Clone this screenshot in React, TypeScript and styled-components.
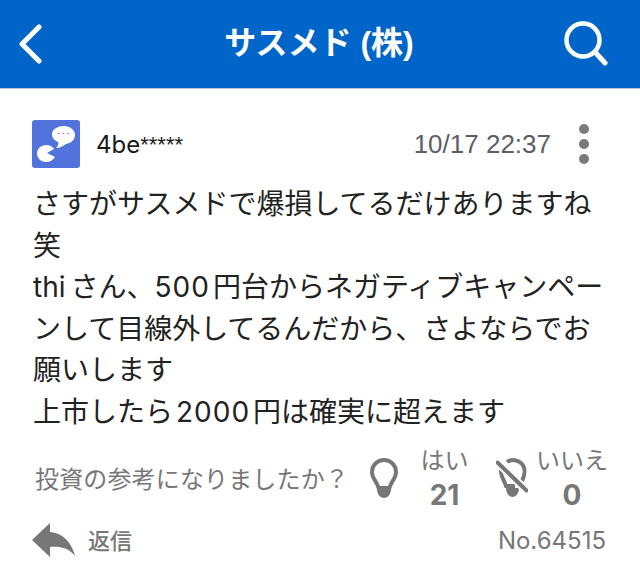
import styled, { createGlobalStyle } from "styled-components";

const GlobalStyle = createGlobalStyle`
	html, body {
		margin: 0;
		padding: 0;
		background: #fff;
	}
	body {
		font-family: Inter, "Noto Sans CJK JP", sans-serif;
	}
`;

const Page = styled.div`
	width: 640px;
	height: 576px;
	overflow: hidden;
	background: #fff;
`;

const Header = styled.header`
	height: 89px;
	box-sizing: border-box;
	padding: 0 18px;
	background: #0065c8;
	display: grid;
	grid-template-columns: 1fr auto 1fr;
	align-items: center;
	border-bottom: 1px solid #b9c6d6;
`;

const HeaderButton = styled.div<{ $end?: boolean }>`
	display: flex;
	justify-content: ${(p) => (p.$end ? "flex-end" : "flex-start")};
	margin-right: ${(p) => (p.$end ? 14 : 0)}px;
`;

const Title = styled.h1`
	margin: 0 2px 2px 0;
	color: #fff;
	font-family: "Liberation Sans", "Noto Sans CJK JP", sans-serif;
	font-size: 32px;
	font-weight: 700;
	line-height: 86px;
`;

const Post = styled.article`
	padding: 31px 24px 0 32px;
`;

const Meta = styled.div`
	display: flex;
	align-items: center;
	height: 48px;
`;

const Avatar = styled.svg`
	width: 48px;
	height: 48px;
	flex: none;
`;

const UserName = styled.span`
	margin-left: 16px;
	font-size: 24px;
	color: #1a1a1a;
	flex: 1;
`;

const Masked = styled.span`
	font-family: "Liberation Sans", sans-serif;
	font-size: 22px;
	vertical-align: 1px;
`;

const Stamp = styled.time`
	font-size: 26px;
	color: #5c6066;
	font-family: "Liberation Sans", sans-serif;
`;

const Dots = styled.div`
	margin: 0 27px 0 28px;
	display: flex;
	flex-direction: column;
	gap: 5px;
`;

const Dot = styled.span`
	width: 10px;
	height: 10px;
	border-radius: 50%;
	background: #7a7a7a;
`;

const Body = styled.div`
	margin: 16px -24px 0 1px;
	font-size: 28px;
	line-height: 41.6px;
	color: #222;
`;

const Line = styled.div`
	white-space: nowrap;
`;

const Latin = styled.span`
	margin-right: 5px;
`;

const Digits = styled.span<{ $flush?: boolean }>`
	margin: 0 3px 0 ${(p) => (p.$flush ? 0 : 3)}px;
	letter-spacing: 1px;
`;

const Vote = styled.div`
	display: flex;
	align-items: center;
	margin-top: 12px;
	height: 64px;
`;

const Question = styled.span`
	margin-left: 3px;
	width: 335px;
	flex: none;
	font-size: 24px;
	letter-spacing: 0.15px;
	color: #777;
`;

const BulbIcon = styled.svg<{ $off?: boolean }>`
	width: ${(p) => (p.$off ? 32 : 28)}px;
	height: 40px;
	margin-left: ${(p) => (p.$off ? 5 : 0)}px;
	flex: none;
`;

const VoteCount = styled.div<{ $width: number }>`
	width: ${(p) => p.$width}px;
	flex: none;
	padding-top: 2px;
	text-align: center;
	color: #777;
`;

const VoteLabel = styled.div`
	font-size: 24px;
	line-height: 30px;
`;

const VoteNumber = styled.div`
	margin-top: 2px;
	font-size: 28px;
	line-height: 34px;
	font-weight: 700;
`;

const Footer = styled.div`
	display: flex;
	align-items: center;
	justify-content: space-between;
	margin-top: 13px;
	height: 36px;
`;

const Reply = styled.div`
	display: flex;
	align-items: center;
	gap: 12px;
	font-size: 22px;
	line-height: 1;
	font-weight: 500;
	color: #777;
`;

const PostNo = styled.span`
	margin-right: 10px;
	font-size: 24px;
	color: #777;
`;

export default function App() {
	return (
		<Page>
			<GlobalStyle />
			<Header>
				<HeaderButton>
					<svg width="24" height="40" viewBox="0 0 24 40" fill="none">
						<path
							d="M21 3 L4 20 L21 37"
							stroke="#fff"
							strokeWidth="5"
							strokeLinecap="round"
							strokeLinejoin="round"
						/>
					</svg>
				</HeaderButton>
				<Title>サスメド (株)</Title>
				<HeaderButton $end>
					<svg width="44" height="46" viewBox="0 0 44 46" fill="none">
						<circle cx="19" cy="19" r="16.5" stroke="#fff" strokeWidth="4.5" />
						<path d="M31 31 L41 42" stroke="#fff" strokeWidth="5" strokeLinecap="round" />
					</svg>
				</HeaderButton>
			</Header>
			<Post>
				<Meta>
					<Avatar viewBox="0 0 48 48">
						<rect width="48" height="48" rx="3" fill="#5272dc" />
						<path
							d="M32 6 C38 6 43 10 43 15 C43 20 39 23 34 24 C31 26 28 28 24 28 C26 26 27 24 26 22 C22 20 20 18 20 14 C20 9 26 6 32 6 Z"
							fill="#fff"
						/>
						<circle cx="27" cy="13.5" r="0.8" fill="#a45bd0" />
						<circle cx="31.5" cy="13.5" r="0.8" fill="#a45bd0" />
						<circle cx="36" cy="13.5" r="0.8" fill="#a45bd0" />
						<path
							d="M14 25 C18 25 21 27 22 29 L15 33 L23 37 C21 40 18 42 14 42 C9 42 5 38 5 33.5 C5 29 9 25 14 25 Z"
							fill="#fff"
						/>
					</Avatar>
					<UserName>
						4be<Masked>*****</Masked>
					</UserName>
					<Stamp>10/17 22:37</Stamp>
					<Dots>
						<Dot />
						<Dot />
						<Dot />
					</Dots>
				</Meta>
				<Body>
					<Line>さすがサスメドで爆損してるだけありますね</Line>
					<Line>笑</Line>
					<Line>
						<Latin>thi</Latin>さん、<Digits $flush>500</Digits>円台からネガティブキャンペー
					</Line>
					<Line>ンして目線外してるんだから、さよならでお</Line>
					<Line>願いします</Line>
					<Line>
						上市したら<Digits>2000</Digits>円は確実に超えます
					</Line>
				</Body>
				<Vote>
					<Question>投資の参考になりましたか？</Question>
					<BulbIcon viewBox="0 0 28 40" fill="none">
						<path
							d="M8.5 30 C7.5 24 2 21 2 14 C2 7 7.5 2 14 2 C20.5 2 26 7 26 14 C26 21 20.5 24 19.5 30 Z"
							stroke="#777"
							strokeWidth="4"
							strokeLinejoin="round"
						/>
						<path d="M7 31 H21 C21 36 18 40 14 40 C10 40 7 36 7 31 Z" fill="#777" />
					</BulbIcon>
					<VoteCount $width={93}>
						<VoteLabel>はい</VoteLabel>
						<VoteNumber>21</VoteNumber>
					</VoteCount>
					<BulbIcon $off viewBox="0 0 32 40" fill="none">
						<path
							d="M11 4 C15 1 22 1.5 26 6 C29.5 10 29 17 26 23 M5 12 C4 18 8 21 10 28 H19"
							stroke="#777"
							strokeWidth="4"
						/>
						<path d="M10 30 H23 C23 35 20 39 16.5 39 C13 39 10 35 10 30 Z" fill="#777" />
						<path d="M1 4 L31 33" stroke="#fff" strokeWidth="8" />
						<path d="M1.5 4.5 L30.5 32.5" stroke="#777" strokeWidth="4" strokeLinecap="round" />
					</BulbIcon>
					<VoteCount $width={88}>
						<VoteLabel>いいえ</VoteLabel>
						<VoteNumber>0</VoteNumber>
					</VoteCount>
				</Vote>
				<Footer>
					<Reply>
						<svg width="44" height="35" viewBox="0 0 44 35">
							<path
								d="M18 0 L0 17 L18 34 V24 C28 23 37 25 43 33 C40 20 31 10 18 9 Z"
								fill="#777"
							/>
						</svg>
						返信
					</Reply>
					<PostNo>No.64515</PostNo>
				</Footer>
			</Post>
		</Page>
	);
}
